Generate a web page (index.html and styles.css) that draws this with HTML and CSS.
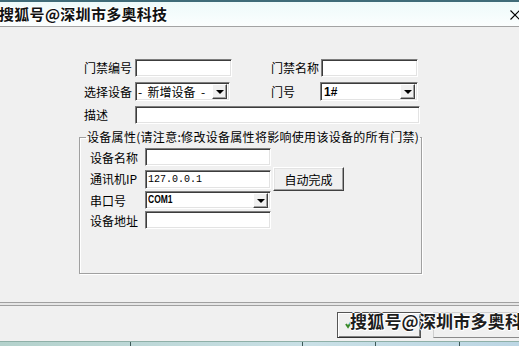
FILE: index.html
```html
<!DOCTYPE html>
<html lang="zh">
<head>
<meta charset="utf-8">
<link rel="stylesheet" href="styles.css">
</head>
<body>
<div class="window">
  <div class="titlebar">
    <span class="title">搜狐号@深圳市多奥科技</span>
    <svg class="close" width="10" height="10" viewBox="0 0 10 10"><path d="M0.5 0.5L9.5 9.5M9.5 0.5L0.5 9.5" stroke="#000" stroke-width="1.1" fill="none"/></svg>
  </div>
  <div class="dialog">
    <div class="top-form">
      <label class="lbl">门禁编号</label>
      <div class="input"></div>
      <span></span>
      <label class="lbl">门禁名称</label>
      <div class="input"></div>

      <label class="lbl">选择设备</label>
      <div class="select sel-device"><span class="val">-&nbsp;&nbsp;新增设备&nbsp;&nbsp;-</span><span class="arrow"></span></div>
      <span></span>
      <label class="lbl">门号</label>
      <div class="select sel-door"><span class="val bold">1#</span><span class="arrow"></span></div>

      <label class="lbl">描述</label>
      <div class="input wide"></div>
    </div>

    <fieldset class="group">
      <legend>设备属性(请注意:修改设备属性将影响使用该设备的所有门禁)</legend>
      <div class="dev-form">
        <label class="lbl">设备名称</label>
        <div class="input"></div>
        <span></span>

        <label class="lbl">通讯机IP</label>
        <div class="input ip"><span class="mono">127.0.0.1</span></div>
        <button class="btn auto">自动完成</button>

        <label class="lbl">串口号</label>
        <div class="select"><span class="val com">COM1</span><span class="arrow"></span></div>
        <span></span>

        <label class="lbl">设备地址</label>
        <div class="input"></div>
        <span></span>
      </div>
    </fieldset>

    <div class="separator"></div>

    <div class="actions">
      <button class="btn default"><svg class="ok" width="7" height="8" viewBox="0 0 7 8"><path d="M1 3L3 6L6 1" stroke="#3a8a2a" stroke-width="2" fill="none"/></svg></button>
      <button class="btn second"><span class="doc"></span></button>
      <span class="watermark">搜狐号@深圳市多奥科技</span>
    </div>
  </div>
  <div class="taskbar">
    <span class="tb tb1"></span><span class="tb tb2"></span><span class="tb tb3"></span><span class="tb tb4"></span>
  </div>
</div>
</body>
</html>
```

FILE: styles.css
```css
* { box-sizing: border-box; }
html, body {
  margin: 0;
  padding: 0;
  width: 519px;
  height: 346px;
  overflow: hidden;
  background: #f0f0f0;
  font-family: "Noto Sans CJK SC", "Liberation Sans", sans-serif;
  font-size: 12px;
  color: #000;
}
.window {
  width: 519px;
  height: 346px;
  display: flex;
  flex-direction: column;
}
.titlebar {
  height: 27px;
  flex: none;
  border-top: 2px solid #3f6b78;
  border-bottom: 1px solid #a3a3a3;
  background: linear-gradient(#eefafa, #fbfefe);
  display: flex;
  align-items: center;
  justify-content: space-between;
  overflow: hidden;
}
.title {
  margin-left: -1px;
  font-size: 15px;
  font-weight: bold;
  letter-spacing: 0.3px;
  color: #111;
  line-height: 20px;
  text-shadow: 1px 0 0 #fff, -1px 0 0 #fff, 0 1px 0 #fff, 0 -1px 0 #fff;
}
.close {
  margin-right: -1px;
  margin-top: 2px;
}
.dialog {
  flex: 1;
  position: relative;
  background: #f0f0f0;
}
.top-form {
  display: grid;
  grid-template-columns: 51px 97px 39px 50px 97px;
  grid-template-rows: 18px 19px 18px;
  row-gap: 5px;
  padding: 32px 0 0 84px;
  align-items: center;
}
.lbl {
  line-height: 16px;
  white-space: nowrap;
}
.input {
  height: 18px;
  background: #fff;
  border: 1px solid;
  border-color: #7d7d7d #ffffff #ffffff #7d7d7d;
  box-shadow: inset 1px 1px 0 #3c3c3c, inset -1px -1px 0 #e3e3e3;
  display: flex;
  align-items: center;
  padding-left: 2px;
}
.input.wide {
  grid-column: 2 / 6;
  margin-right: -2px;
}
.select {
  height: 19px;
  background: #fff;
  border: 1px solid;
  border-color: #7d7d7d #ffffff #ffffff #7d7d7d;
  box-shadow: inset 1px 1px 0 #3c3c3c, inset -1px -1px 0 #e3e3e3;
  display: flex;
  align-items: center;
  justify-content: space-between;
  padding: 2px;
}
.sel-device { width: 95px; }
.sel-door { margin-left: -1px; }
.val {
  white-space: nowrap;
  line-height: 14px;
}
.bold { font-weight: bold; font-family: "Liberation Sans", sans-serif; font-size: 12px; padding-left: 1px; }
.com { font-family: "Liberation Sans", sans-serif; font-size: 10px; font-weight: bold; transform: scaleX(0.85); transform-origin: left; }
.mono { font-family: "Liberation Mono", monospace; font-size: 10px; }
.arrow {
  width: 15px;
  height: 15px;
  flex: none;
  background: #f0f0f0;
  border: 1px solid;
  border-color: #ffffff #404040 #404040 #ffffff;
  box-shadow: inset -1px -1px 0 #a0a0a0;
  display: flex;
  align-items: center;
  justify-content: center;
}
.arrow::before {
  content: "";
  border-left: 4px solid transparent;
  border-right: 4px solid transparent;
  border-top: 4px solid #000;
  margin-top: 1px;
}
.group {
  margin: 6px 0 0 79px;
  width: 343px;
  padding: 4px 0 43px 10px;
  border: 1px solid #a0a0a0;
  box-shadow: inset 1px 1px 0 #fff, 1px 1px 0 #fff;
  min-width: 0;
}
.group legend {
  margin-left: -4px;
  padding: 0 1px;
  line-height: 14px;
  letter-spacing: 0.3px;
  white-space: nowrap;
}
.dev-form {
  display: grid;
  grid-template-columns: 53px 126px 71px;
  column-gap: 2px;
  grid-template-rows: 19px 24px 20px 19px;
  align-items: start;
}
.dev-form .lbl { align-self: center; }
.dev-form .ip { align-self: center; height: 19px; }
.dev-form .select { height: 18px; }
.btn {
  font-family: "Noto Sans CJK SC", sans-serif;
  font-size: 12px;
  color: #000;
  background: #f0f0f0;
  border: 1px solid;
  border-color: #ffffff #404040 #404040 #ffffff;
  box-shadow: inset -1px -1px 0 #a0a0a0, inset 1px 1px 0 #e3e3e3;
  padding: 0;
  margin: 0;
}
.auto {
  height: 24px;
  width: 71px;
}
.separator {
  margin-top: 28px;
  height: 4px;
  border-top: 1px solid #a0a0a0;
  border-bottom: 1px solid #a0a0a0;
  background: #e6e6e6;
}
.actions {
  display: flex;
  gap: 12px;
  padding: 6px 0 0 337px;
  position: relative;
}
.actions .btn {
  height: 26px;
  flex: none;
}
.default {
  width: 84px;
  border-color: #555 #555 #303030 #555;
  box-shadow: inset 1px 1px 0 #fff, inset -1px -1px 0 #808080;
  display: flex;
  align-items: center;
  padding-left: 7px;
}
.second {
  width: 90px;
  border-color: #cfcfcf #8a8a8a #8a8a8a #cfcfcf;
  box-shadow: none;
  position: relative;
}
.doc {
  position: absolute;
  left: 5px;
  top: 3px;
  width: 7px;
  height: 12px;
  border: 1px solid #8a8a8a;
  border-top-color: #cfcfcf;
}
.watermark {
  position: absolute;
  left: 350px;
  top: 3px;
  font-size: 17px;
  font-weight: bold;
  white-space: nowrap;
  color: #1d1d1d;
  letter-spacing: 0.2px;
  line-height: 24px;
  text-shadow: 1px 0 0 #fff, -1px 0 0 #fff, 0 1px 0 #fff, 0 -1px 0 #fff, 1px 1px 0 #fff;
}
.taskbar {
  height: 5px;
  flex: none;
  display: flex;
  background: linear-gradient(90deg, #b4d2cc, #c9e0e6 60%, #bcd6e4);
  border-top: 1px solid #8fb0a8;
}
.tb { height: 100%; }
.tb1 { width: 130px; }
.tb2 { width: 172px; border-left: 1px solid #3d5a58; }
.tb3 { width: 73px; border-left: 1px solid #3d5a58; }
.tb4 { width: 85px; border-left: 1px solid #3d5a58; border-right: 1px solid #3d5a58; }
```
